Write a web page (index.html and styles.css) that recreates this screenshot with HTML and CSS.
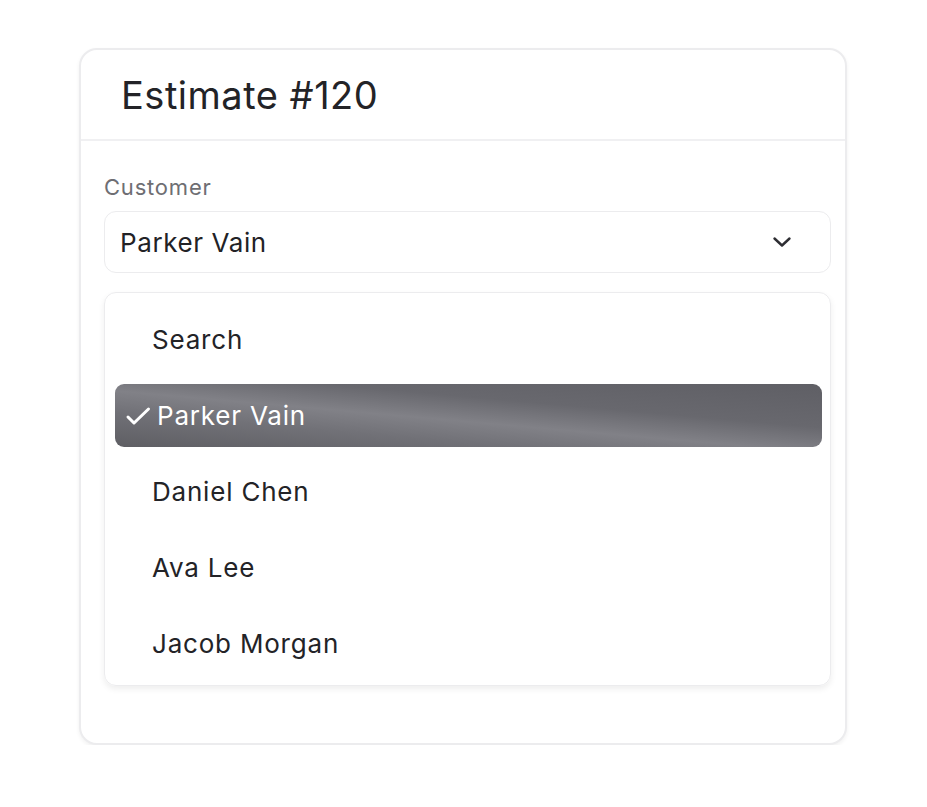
FILE: index.html
```html
<!DOCTYPE html>
<html>
<head>
<meta charset="utf-8">
<link rel="stylesheet" href="styles.css">
</head>
<body>
<div class="page">
  <div class="card">
    <div class="card-header">
      <h1 class="title">Estimate #120</h1>
    </div>
    <div class="card-body">
      <div class="label">Customer</div>
      <div class="select">
        <span class="select-value">Parker Vain</span>
        <svg class="chevron" width="20" height="12" viewBox="0 0 20 12"><path d="M2.5 2.5 L10 9.5 L17.5 2.5" fill="none" stroke="#2e2e33" stroke-width="2.4" stroke-linecap="round" stroke-linejoin="round"/></svg>
      </div>
      <div class="dropdown">
        <div class="item">Search</div>
        <div class="item selected">
          <svg class="check" width="26" height="20" viewBox="0 0 26 20"><path d="M3 11 L9 17 L23.5 3" fill="none" stroke="#ffffff" stroke-width="3" stroke-linecap="round" stroke-linejoin="round"/></svg>
          <span>Parker Vain</span>
        </div>
        <div class="item">Daniel Chen</div>
        <div class="item">Ava Lee</div>
        <div class="item">Jacob Morgan</div>
      </div>
    </div>
  </div>
</div>
</body>
</html>
```

FILE: styles.css
```css
html, body {
  margin: 0;
  padding: 0;
  background: #ffffff;
}
body {
  font-family: Inter, "Noto Sans", sans-serif;
  color: #232327;
}
.page {
  padding: 48px 0 0 79px;
}
.card {
  width: 768px;
  height: 697px;
  box-sizing: border-box;
  border: 2px solid #ececee;
  border-radius: 18px;
  box-shadow: 0 2px 4px rgba(0,0,0,0.06);
  background: #fff;
}
.card-header {
  height: 89px;
  border-bottom: 2px solid #f0f0f2;
  display: flex;
  align-items: center;
  padding-left: 40px;
}
.title {
  margin: 0;
  font-size: 38px;
  font-weight: 400;
  letter-spacing: 0.5px;
  color: #232327;
  padding-top: 1px;
}
.card-body {
  padding: 32px 14px 0 23px;
}
.label {
  font-size: 22px;
  color: #6e6e73;
  line-height: 28px;
  letter-spacing: 0.8px;
}
.select {
  margin-top: 10px;
  height: 62px;
  box-sizing: border-box;
  border: 1.5px solid #ececee;
  border-radius: 12px;
  display: flex;
  align-items: center;
  justify-content: space-between;
  padding: 0 38px 0 15px;
}
.select-value {
  font-size: 26px;
  letter-spacing: 0.6px;
  color: #222226;
}
.dropdown {
  margin-top: 19px;
  height: 394px;
  box-sizing: border-box;
  border: 1.5px solid #ececee;
  border-radius: 12px;
  box-shadow: 0 3px 6px rgba(0,0,0,0.07);
  padding: 15px 8px 0 10px;
  display: flex;
  flex-direction: column;
  gap: 13px;
}
.item {
  height: 63px;
  flex: none;
  display: flex;
  align-items: center;
  padding-left: 37px;
  font-size: 26px;
  letter-spacing: 0.8px;
  color: #232327;
  border-radius: 9px;
}
.item.selected {
  padding-left: 10px;
  color: #ffffff;
  background: linear-gradient(185deg, #5f5f65 0%, #68686e 35%, #818187 55%, #717177 72%, #5e5e63 100%);
}
.check {
  margin-right: 6px;
}
```
